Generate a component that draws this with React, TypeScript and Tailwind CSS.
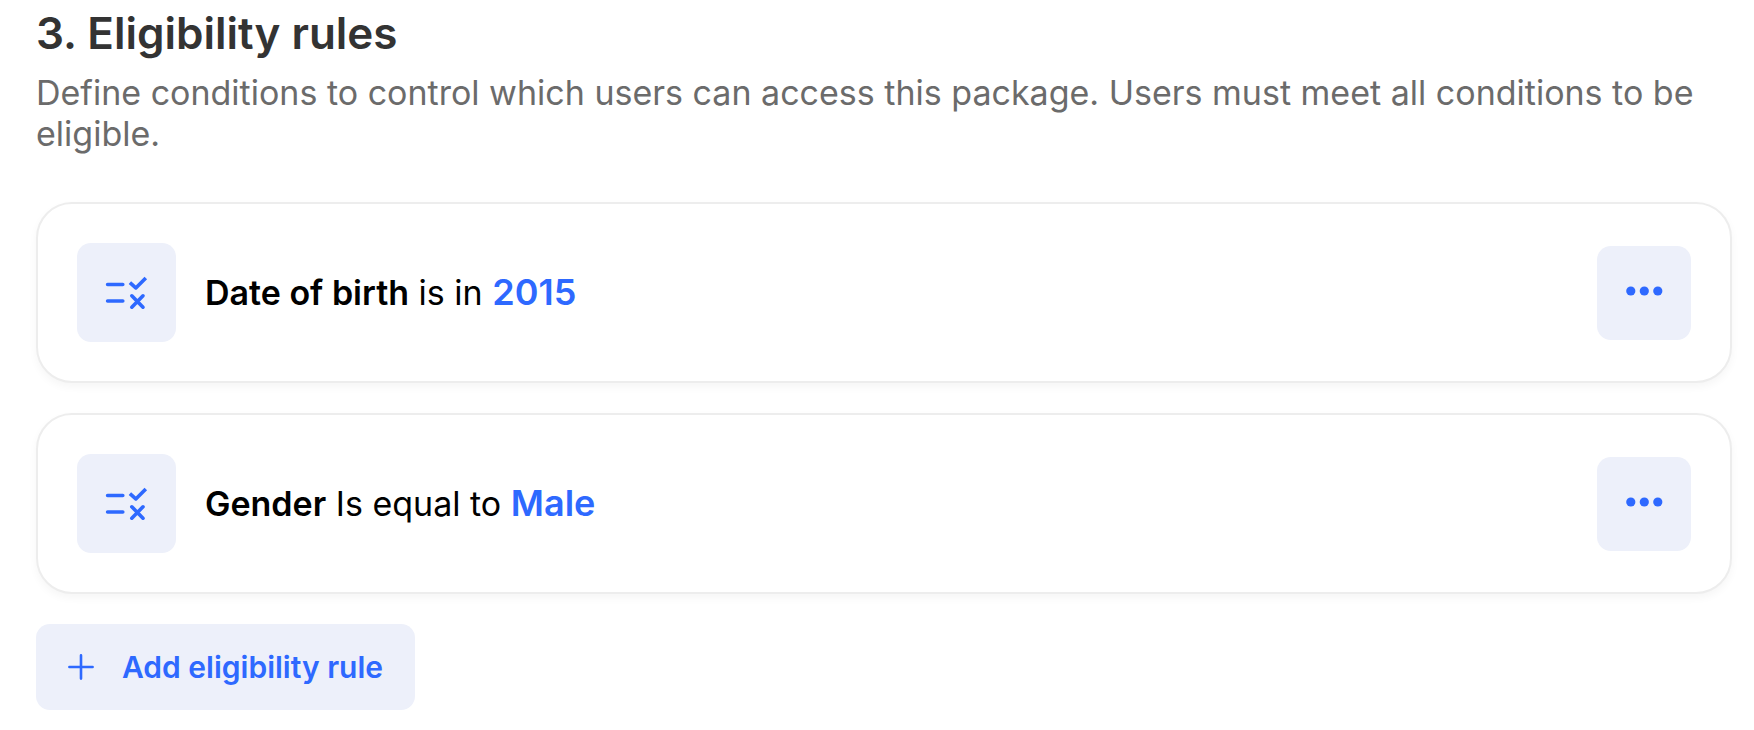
import { ReactNode } from 'react';

interface Rule {
  id: string;
  field: string;
  operator: string;
  value: string;
}

const rules: Rule[] = [
  { id: 'dob', field: 'Date of birth', operator: 'is in', value: '2015' },
  { id: 'gender', field: 'Gender', operator: 'Is equal to', value: 'Male' },
];

function RuleIcon() {
  return (
    <svg
      width="48"
      height="48"
      viewBox="0 0 48 48"
      fill="none"
      stroke="currentColor"
      strokeWidth="3.6"
      strokeLinecap="round"
      strokeLinejoin="round"
      aria-hidden="true"
    >
      <path d="M4.6 15.5H19.8M4.6 32H19.8" />
      <path d="M26.9 13.6L32.8 18.9L42.8 8.9" strokeLinecap="butt" />
      <path d="M28.8 26.8L40 38.2M40 26.8L28.8 38.2" />
    </svg>
  );
}

function DotsIcon() {
  return (
    <svg width="48" height="48" viewBox="0 0 48 48" fill="currentColor" aria-hidden="true">
      <circle cx="10.8" cy="22" r="4.6" />
      <circle cx="24.3" cy="22" r="4.6" />
      <circle cx="37.8" cy="22" r="4.6" />
    </svg>
  );
}

function PlusIcon() {
  return (
    <svg
      width="26"
      height="26"
      viewBox="0 0 26 26"
      fill="none"
      stroke="currentColor"
      strokeWidth="2.6"
      strokeLinecap="round"
      aria-hidden="true"
    >
      <path d="M13 1.4V24.6M1.4 13H24.6" />
    </svg>
  );
}

function RuleCard({ rule, children }: { rule: Rule; children?: ReactNode }) {
  return (
    <li className="flex items-center justify-between rounded-[36px] border-2 border-[#ededed] bg-white p-[39px] shadow-[0_4px_8px_rgba(0,0,0,0.04)]">
      <div className="flex items-center gap-[29px]">
        <div className="flex size-[99px] shrink-0 items-center justify-center rounded-[14px] bg-[#edf0fa] text-[#2e69ff]">
          <RuleIcon />
        </div>
        <p className="text-[34px] leading-[41px] text-black">
          <span className="font-semibold">{rule.field}</span> {rule.operator}{' '}
          <span className="text-[36px] font-semibold text-[#2e69ff]">{rule.value}</span>
        </p>
      </div>
      {children}
    </li>
  );
}

export default function App() {
  return (
    <section className="bg-white px-9 pt-1 pr-[22px] font-['Inter',sans-serif]">
      <h2 className="text-[44px] leading-[58px] font-semibold text-[#333333]">
        3. Eligibility rules
      </h2>
      <p className="mt-[10px] text-[34px] leading-[41px] text-[#6b6b6b]">
        Define conditions to control which users can access this package. Users must meet all conditions to be eligible.
      </p>

      <ul className="mt-12 flex flex-col gap-[30px]">
        {rules.map((rule) => (
          <RuleCard key={rule.id} rule={rule}>
            <button
              type="button"
              aria-label={`Options for ${rule.field}`}
              className="flex size-[94px] shrink-0 items-center justify-center rounded-[14px] bg-[#edf0fa] text-[#2e69ff]"
            >
              <DotsIcon />
            </button>
          </RuleCard>
        ))}
      </ul>

      <button
        type="button"
        className="mt-[30px] flex h-[86px] items-center gap-7 rounded-[14px] bg-[#edf0fa] px-8 text-[30px] font-semibold text-[#2e69ff]"
      >
        <PlusIcon />
        Add eligibility rule
      </button>
    </section>
  );
}
